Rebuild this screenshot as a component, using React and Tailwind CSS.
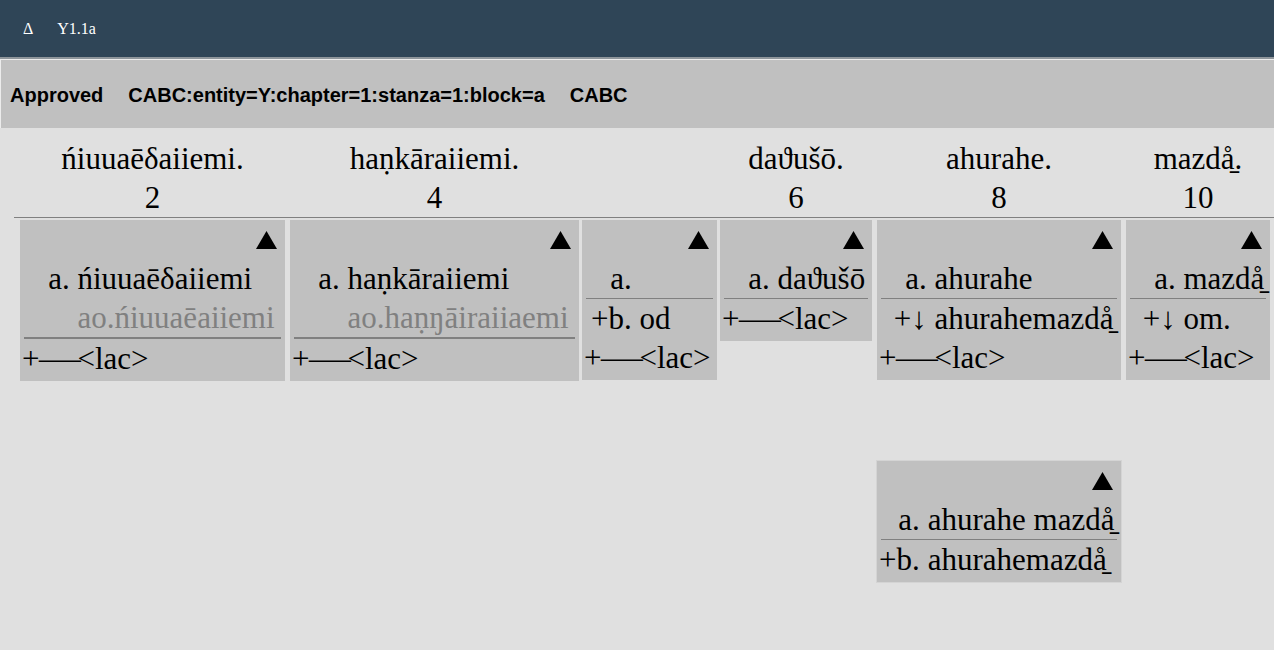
import React from "react";

const MAZDA = "mazda\u030A\u0331";
const tf = "font-['Liberation_Serif']";

// long dash used in the "+—" sigla, a bit wider than a plain em dash
const Dash = () => (
    <span className="inline-block w-[38px] text-left">
        <span className="inline-block origin-left scale-x-[1.35]">—</span>
    </span>
);

const LAC = { l: "lac", t: "<lac>" };

const columns = [
    {
        head: "ńiuuaēδaiiemi.",
        num: "2",
        w: "w-[265px]",
        rows: [
            { l: "a.\u00a0", t: "ńiuuaēδaiiemi" },
            { l: "", t: "ao.ńiuuaēaiiemi", grey: true },
            { div: 2 },
            LAC
        ]
    },
    {
        head: "haṇkāraiiemi.",
        num: "4",
        w: "w-[289px]",
        rows: [
            { l: "a.\u00a0", t: "haṇkāraiiemi" },
            { l: "", t: "ao.haṇŋāiraiiaemi", grey: true },
            { div: 2 },
            LAC
        ]
    },
    {
        head: "\u00a0",
        num: "\u00a0",
        w: "w-[135px]",
        rows: [{ l: "a.\u00a0", t: "" }, { div: 1 }, { l: "+b.\u00a0", t: "od" }, LAC]
    },
    {
        head: "daϑušō.",
        num: "6",
        w: "w-[152px]",
        rows: [{ l: "a.\u00a0", t: "daϑušō" }, { div: 1 }, LAC]
    },
    {
        head: "ahurahe.",
        num: "8",
        w: "w-[244px]",
        rows: [
            { l: "a.\u00a0", t: "ahurahe" },
            { div: 1 },
            { l: "+↓\u00a0", t: "ahurahe" + MAZDA },
            LAC
        ]
    },
    {
        head: MAZDA + ".",
        num: "10",
        w: "w-[144px]",
        rows: [{ l: "a.\u00a0", t: MAZDA }, { div: 1 }, { l: "+↓\u00a0", t: "om." }, LAC]
    }
];

const grid = "grid grid-cols-[270px_292px_138px_157px_249px_144px]";

const Triangle = () => (
    <div className="flex h-[39px] items-center justify-end pr-[4px]">
        <svg width="21" height="18" viewBox="0 0 21 18">
            <polygon points="10.5,0 21,18 0,18" fill="#000" />
        </svg>
    </div>
);

const Cell = ({ rows, w, extra = "", gap = "gap-x-0" }) => (
    <div className={`${w} ${extra} bg-[#c0c0c0] px-[4px] pb-[3px]`}>
        <Triangle />
        <div className={`grid grid-cols-[auto_1fr] ${gap}`}>
            {rows.map((r, i) =>
                r.div ? (
                    <div
                        key={i}
                        className={`col-span-2 bg-[#808080] ${r.div === 2 ? "h-[2px]" : "h-px"}`}
                    />
                ) : (
                    <React.Fragment key={i}>
                        <div className={`${tf} -ml-[2px] whitespace-pre py-[2px] text-right text-[31px] leading-[35px]`}>
                            {r.l === "lac" ? (
                                <>
                                    +<Dash />
                                </>
                            ) : (
                                r.l
                            )}
                        </div>
                        <div
                            className={`${tf} whitespace-nowrap py-[2px] text-[31px] leading-[35px] ${
                                r.grey ? "text-[#808080]" : "text-black"
                            }`}
                        >
                            {r.t}
                        </div>
                    </React.Fragment>
                )
            )}
        </div>
    </div>
);

export default function App() {
    return (
        <div className="min-h-screen overflow-hidden bg-[#e0e0e0]">
            <div className="flex h-[57px] items-center gap-[24px] bg-[#2f4557] px-[23px] font-['Liberation_Serif'] text-[16px] text-white">
                <span>Δ</span>
                <span>Y1.1a</span>
            </div>
            <div className="h-[2px] bg-[#8e959b]" />
            <div className="flex h-[69px] items-center gap-[25px] border-l border-t border-[#ececec] bg-[#c0c0c0] px-[9px] pt-[1px] font-['Liberation_Sans'] text-[20px] font-bold text-black">
                <span>Approved</span>
                <span>CABC:entity=Y:chapter=1:stanza=1:block=a</span>
                <span>CABC</span>
            </div>

            <div className="font-serif text-[31px] text-black">
                <div className="ml-[14px] mt-[11px] border-b border-[#808080] pl-[6px]">
                    <div className={grid}>
                        {columns.map((c, i) => (
                            <div key={i} className={`${c.w} text-center leading-[35px]`}>
                                <div className={`${tf} whitespace-nowrap py-[2px] text-[31px]`}>{c.head}</div>
                                <div className={`${tf} py-[2px] text-[31px]`}>{c.num}</div>
                            </div>
                        ))}
                    </div>
                </div>

                <div className={`${grid} ml-[20px] mt-[2px] items-start`}>
                    {columns.map((c, i) => (
                        <Cell key={i} rows={c.rows} w={c.w} />
                    ))}
                </div>

                <div className={`${grid} ml-[20px] mt-[80px] items-start`}>
                    <div />
                    <div />
                    <div />
                    <div />
                    <Cell
                        w="w-[244px]"
                        gap="gap-x-[8px]"
                        extra="outline outline-1 outline-[#d4d4d4]"
                        rows={[
                            { l: "a.", t: "ahurahe " + MAZDA },
                            { div: 1 },
                            { l: "+b.", t: "ahurahe" + MAZDA }
                        ]}
                    />
                </div>
            </div>
        </div>
    );
}
